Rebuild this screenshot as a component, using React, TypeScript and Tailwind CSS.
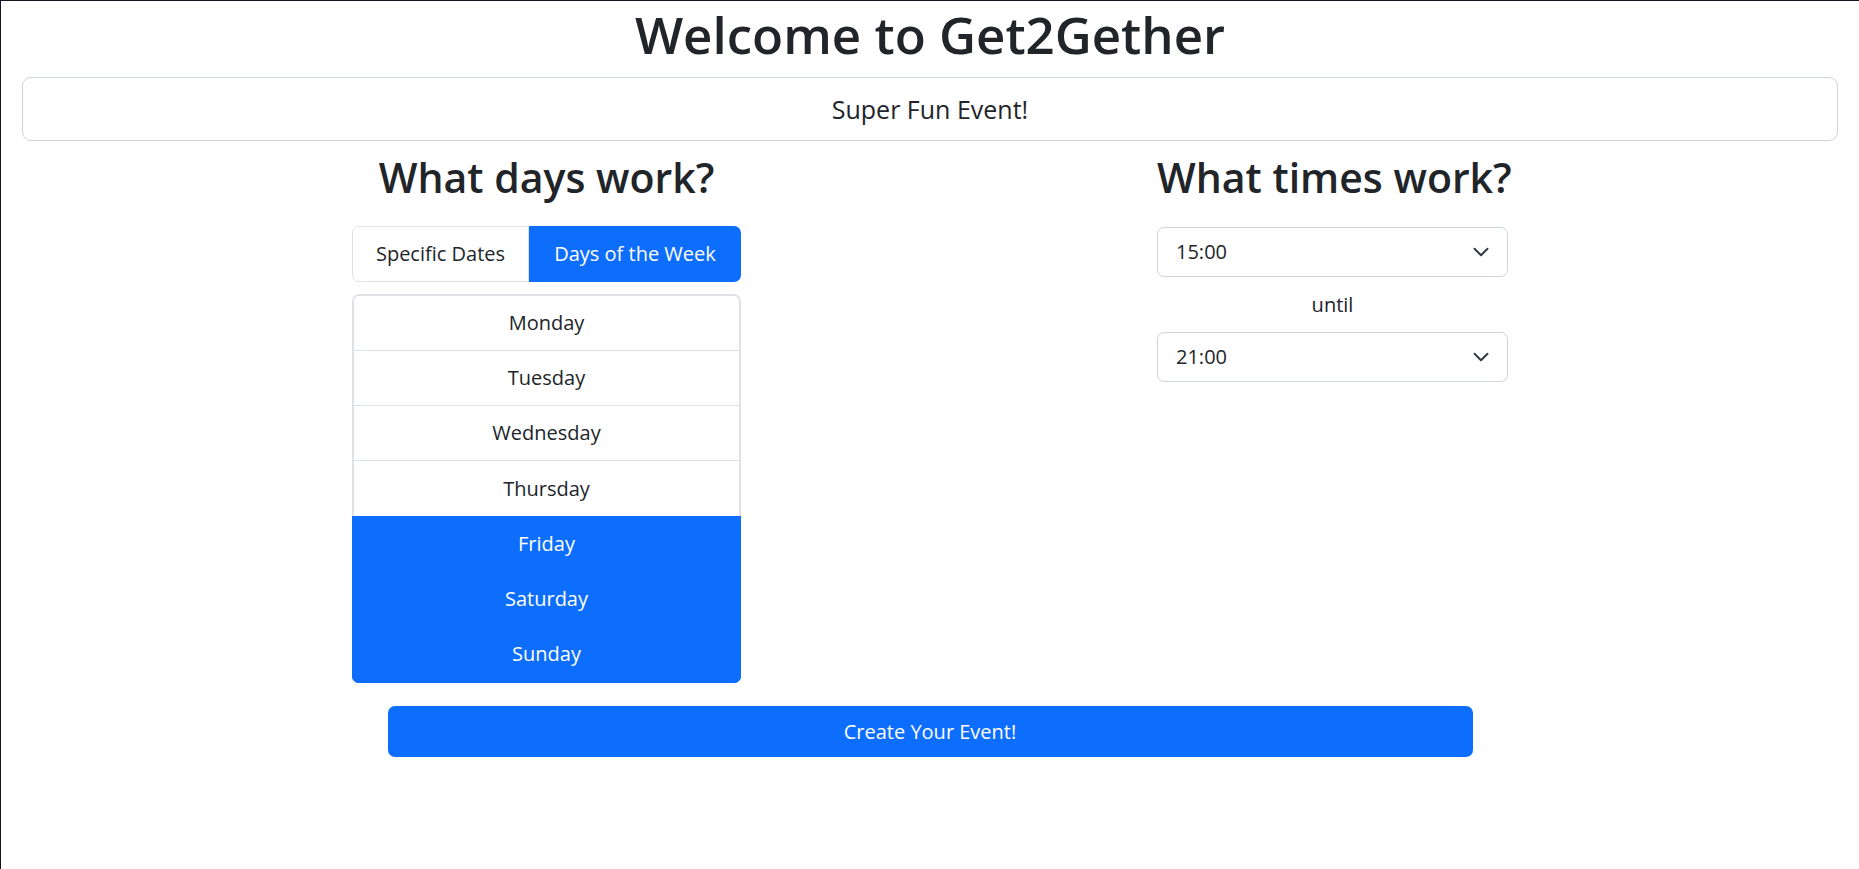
import { ChevronDown } from "lucide-react";

const days = ["Monday", "Tuesday", "Wednesday", "Thursday", "Friday", "Saturday", "Sunday"];
const picked = ["Friday", "Saturday", "Sunday"];

export default function App() {
  return (
    <div className="min-h-screen bg-white border-t border-l border-[#1a1024] font-['Open_Sans',sans-serif] text-[#212529]">
      <h1 className="text-center text-[51px] font-semibold leading-[62px] pt-[2px]">Welcome to Get2Gether</h1>

      <input
        defaultValue="Super Fun Event!"
        className="block w-[calc(100%-42px)] mx-[21px] mt-[12px] h-[64px] rounded-[9px] border border-[#ced4da] text-center text-[25px] outline-none"
      />

      <div className="flex justify-center gap-[416px] mt-[12px]">
        <div className="w-[389px]">
          <h2 className="text-center text-[41px] font-semibold leading-[49px] whitespace-nowrap">What days work?</h2>
          <div className="flex mt-[24px] h-[56px] text-[20px]">
            <button className="w-[177px] border border-[#dee2e6] rounded-l-[7px] bg-white">Specific Dates</button>
            <button className="w-[212px] bg-[#0d6efd] text-white rounded-r-[7px]">Days of the Week</button>
          </div>
          <div className="mt-[12px] rounded-[7px] overflow-hidden text-[20px]">
            {days.map((d, i) => (
              <DayRow key={d} day={d} active={picked.includes(d)} first={i === 0} last={i === days.length - 1} sep={i < 3} />
            ))}
          </div>
        </div>

        <div className="w-[351px]">
          <h2 className="text-center text-[41px] font-semibold leading-[49px] whitespace-nowrap">What times work?</h2>
          <TimeSelect value="15:00" className="mt-[25px]" />
          <div className="h-[55px] flex items-center justify-center text-[20px]">until</div>
          <TimeSelect value="21:00" />
        </div>
      </div>

      <button className="block mx-auto mt-[23px] w-[1085px] h-[51px] rounded-[7px] bg-[#0d6efd] text-white text-[20px]">
        Create Your Event!
      </button>
    </div>
  );
}

function DayRow({ day, active, first, last, sep }: { day: string; active: boolean; first: boolean; last: boolean; sep: boolean }) {
  const h = first || last ? "h-[57px]" : "h-[55px]";
  return (
    <div
      className={`${h} flex items-center justify-center border-x-2 ${first ? "border-t-2" : ""} ${last ? "border-b-2" : ""} ${sep ? "border-b" : ""} ${
        active ? "bg-[#0d6efd] border-[#0d6efd] text-white" : "bg-white border-[#dee2e6]"
      } ${first ? "rounded-t-[7px]" : ""}`}
    >
      {day}
    </div>
  );
}

function TimeSelect({ value, className = "" }: { value: string; className?: string }) {
  return (
    <div className={`h-[50px] flex items-center justify-between pl-[18px] pr-[13px] rounded-[7px] border border-[#ced4da] text-[20px] ${className}`}>
      <span>{value}</span>
      <ChevronDown size={26} strokeWidth={1.8} className="text-[#343a40]" />
    </div>
  );
}
